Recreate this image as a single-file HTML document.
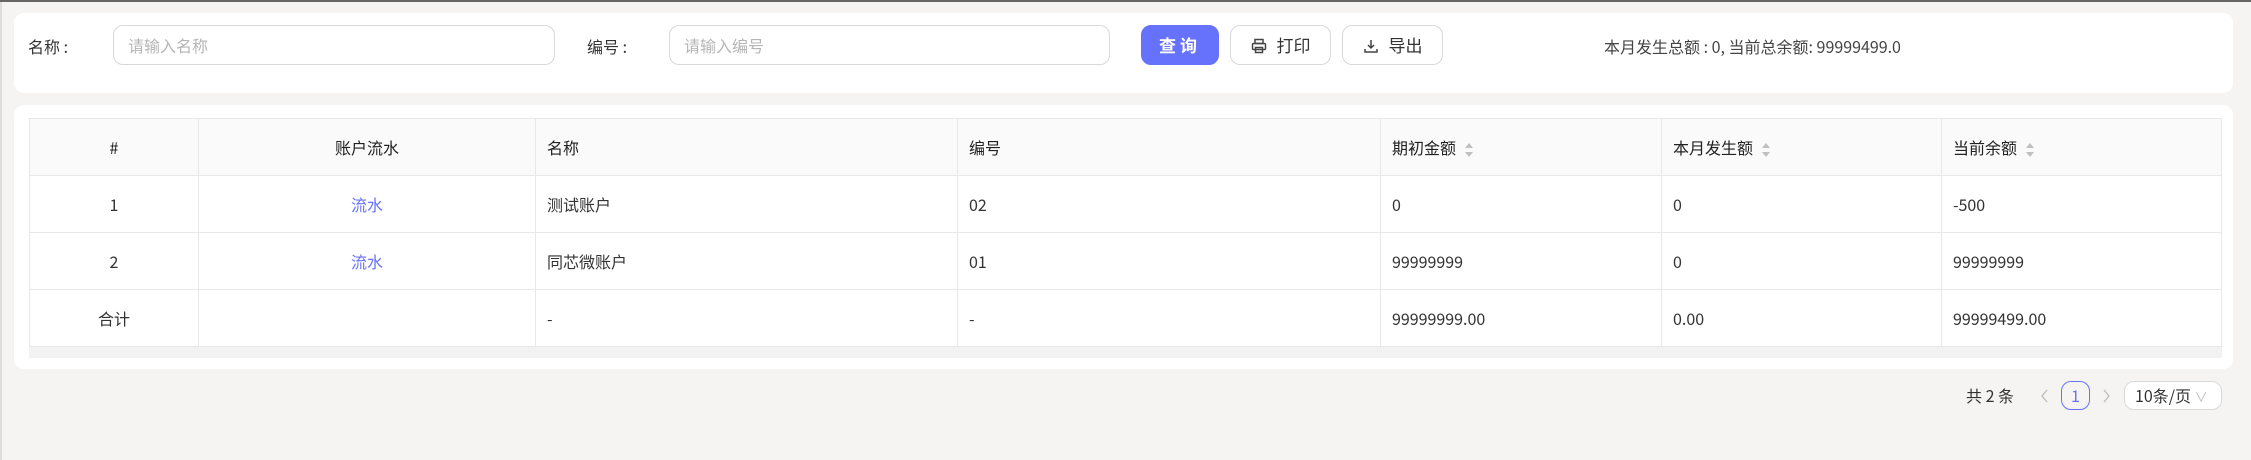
<!DOCTYPE html>
<html><head><meta charset="utf-8"><style>
*{box-sizing:border-box;margin:0;padding:0}
body{width:2251px;height:460px;background:#f5f4f2;font-family:"Noto Sans CJK SC","Liberation Sans",sans-serif;color:#333;font-size:16px;position:relative;overflow:hidden;box-shadow:inset 0 2px 0 #666,inset 2px 0 0 #ddd}
.abs{position:absolute;line-height:24px}
.panel{background:#fff;border-radius:10px}
.inp{border:1px solid #d9d9d9;border-radius:10px;height:40px;color:#b5b5b5;padding:0 14px;line-height:38px;font-size:16px}
.btn{border:1px solid #d9d9d9;border-radius:10px;height:40px;line-height:38px;text-align:center;font-size:17px;color:#333;background:#fff}
table{border-collapse:collapse;position:absolute;left:29px;top:118px;width:2193px;font-size:16px}
td,th{border:1px solid #e8e8e8;height:57px;padding:0 11px;text-align:left;font-weight:normal;color:#333;line-height:24px;vertical-align:middle}
th{background:#fafafa;color:#222}
.c{text-align:center}
a{color:#6672fb;text-decoration:none}
.sort{display:inline-block;vertical-align:middle;margin-left:9px;width:8px;height:14px;position:relative}
.sort:before{content:"";position:absolute;top:0;left:0;border:4px solid transparent;border-bottom:5px solid #c0c0c0;border-top:0}
.sort:after{content:"";position:absolute;bottom:0;left:0;border:4px solid transparent;border-top:5px solid #c0c0c0;border-bottom:0}
</style></head><body>
<div class="abs panel" style="left:14px;top:13px;width:2219px;height:80px"></div>
<div class="abs" style="left:28px;top:34px">名称 :</div>
<div class="abs inp" style="left:113px;top:25px;width:442px;line-height:38px">请输入名称</div>
<div class="abs" style="left:587px;top:34px">编号 :</div>
<div class="abs inp" style="left:669px;top:25px;width:441px;line-height:38px">请输入编号</div>
<div class="abs btn" style="left:1141px;top:25px;width:78px;background:#6672fb;border-color:#6672fb;color:#fff;font-weight:bold;letter-spacing:4px;line-height:38px">查询</div>
<div class="abs btn" style="left:1230px;top:25px;width:101px;line-height:38px"><svg width="16" height="16" viewBox="0 0 16 16" style="vertical-align:-2px;margin-right:10px" fill="none" stroke="#444" stroke-width="1.5"><rect x="4" y="1.5" width="8" height="4"/><rect x="1.5" y="5.5" width="13" height="6" rx="1"/><rect x="4.5" y="9.5" width="7" height="5"/></svg>打印</div>
<div class="abs btn" style="left:1342px;top:25px;width:101px;line-height:38px"><svg width="16" height="16" viewBox="0 0 16 16" style="vertical-align:-2px;margin-right:10px" fill="none" stroke="#444" stroke-width="1.5"><path d="M8 2v8M5 7l3 3 3-3M2 11v3h12v-3"/></svg>导出</div>
<div class="abs" style="left:1604px;top:34px;color:#444">本月发生总额 : 0, 当前总余额: 99999499.0</div>
<div class="abs panel" style="left:14px;top:105px;width:2219px;height:264px"></div>
<div class="abs" style="left:29px;top:347px;width:2193px;height:11px;background:#f2f2f2"></div>
<table>
<tr><th class="c" style="width:169px">#</th><th class="c" style="width:337px">账户流水</th><th style="width:422px">名称</th><th style="width:423px">编号</th><th style="width:281px">期初金额<span class="sort"></span></th><th style="width:280px">本月发生额<span class="sort"></span></th><th>当前余额<span class="sort"></span></th></tr>
<tr><td class="c">1</td><td class="c"><a>流水</a></td><td>测试账户</td><td>02</td><td>0</td><td>0</td><td>-500</td></tr>
<tr><td class="c">2</td><td class="c"><a>流水</a></td><td>同芯微账户</td><td>01</td><td>99999999</td><td>0</td><td>99999999</td></tr>
<tr><td class="c">合计</td><td></td><td>-</td><td>-</td><td>99999999.00</td><td>0.00</td><td>99999499.00</td></tr>
</table>
<div class="abs" style="left:1966px;top:383px">共 2 条</div>
<svg class="abs" style="left:2040px;top:389px" width="10" height="14" viewBox="0 0 10 14" fill="none" stroke="#bbb" stroke-width="1.3"><path d="M7 1L2 7l5 6"/></svg>
<div class="abs" style="left:2061px;top:381px;width:29px;height:29px;border:1px solid #6672fb;border-radius:10px;color:#6672fb;text-align:center;line-height:27px">1</div>
<svg class="abs" style="left:2101px;top:389px" width="10" height="14" viewBox="0 0 10 14" fill="none" stroke="#bbb" stroke-width="1.3"><path d="M3 1l5 6-5 6"/></svg>
<div class="abs" style="left:2124px;top:381px;width:98px;height:29px;border:1px solid #d9d9d9;border-radius:10px;background:#fff;line-height:27px;padding-left:10px">10条/页 <span style="color:#bbb;font-size:13px">∨</span></div>
</body></html>
